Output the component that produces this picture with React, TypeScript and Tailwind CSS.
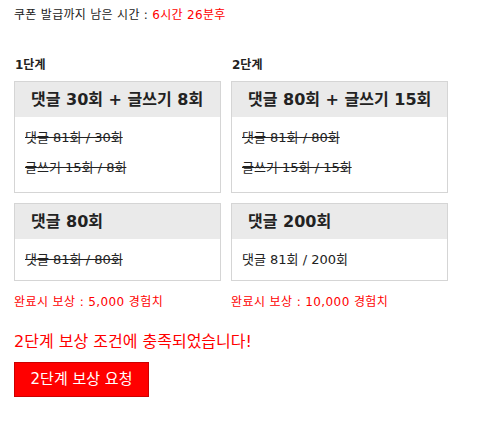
const font = "font-['DejaVu_Sans','Noto_Sans_CJK_KR',sans-serif]";

type Step = {
  title: string;
  lines: { text: string; done: boolean }[];
};

const StepBox = ({ step }: { step: Step }) => (
  <div className="border border-[#d5d5d5] bg-white">
    <div className="bg-[#eaeaea] h-[35px] flex items-center px-4 text-[16px] font-bold text-[#222] whitespace-nowrap">
      {step.title}
    </div>
    <div className={`px-[10px] pt-[11px] flex flex-col gap-[10px] ${step.lines.length > 1 ? "pb-[14px]" : "pb-[10px]"}`}>
      {step.lines.map((line) => (
        <div
          key={line.text}
          className={`text-[13px] leading-[20px] text-[#222] whitespace-nowrap ${line.done ? "line-through" : ""}`}
        >
          {line.text}
        </div>
      ))}
    </div>
  </div>
);

const columns = [
  {
    label: "1단계",
    width: "w-[207px]",
    reward: "5,000",
    steps: [
      {
        title: "댓글 30회 + 글쓰기 8회",
        lines: [
          { text: "댓글 81회 / 30회", done: true },
          { text: "글쓰기 15회 / 8회", done: true },
        ],
      },
      {
        title: "댓글 80회",
        lines: [{ text: "댓글 81회 / 80회", done: true }],
      },
    ],
  },
  {
    label: "2단계",
    width: "w-[217px]",
    reward: "10,000",
    steps: [
      {
        title: "댓글 80회 + 글쓰기 15회",
        lines: [
          { text: "댓글 81회 / 80회", done: true },
          { text: "글쓰기 15회 / 15회", done: true },
        ],
      },
      {
        title: "댓글 200회",
        lines: [{ text: "댓글 81회 / 200회", done: false }],
      },
    ],
  },
];

export default function App() {
  return (
    <div className={`${font} bg-white w-[481px] h-[423px] px-[14px] pt-[7px] text-[#222]`}>
      <div className="text-[12px] leading-[16px] tracking-[0.3px]">
        쿠폰 발급까지 남은 시간 : <span className="text-[#ff0000]">6시간 26분후</span>
      </div>

      <div className="flex gap-[10px] mt-[34px]">
        {columns.map((col) => (
          <div key={col.label} className={`${col.width} flex flex-col`}>
            <div className="text-[12px] font-bold leading-[16px] pl-px mb-[8px]">{col.label}</div>
            <div className="flex flex-col gap-[10px]">
              {col.steps.map((s) => (
                <StepBox key={s.title} step={s} />
              ))}
            </div>
            <div className="text-[12px] leading-[16px] tracking-[0.4px] text-[#ff0000] mt-[13px]">
              완료시 보상 : {col.reward} 경험치
            </div>
          </div>
        ))}
      </div>

      <div className="text-[16px] leading-[20px] text-[#ff0000] mt-[22px]">
        2단계 보상 조건에 충족되었습니다!
      </div>

      <button className="mt-[10px] w-[135px] h-[35px] bg-[#ff0000] border border-[#cc0000] text-white text-[15px] flex items-center justify-center">
        2단계 보상 요청
      </button>
    </div>
  );
}
